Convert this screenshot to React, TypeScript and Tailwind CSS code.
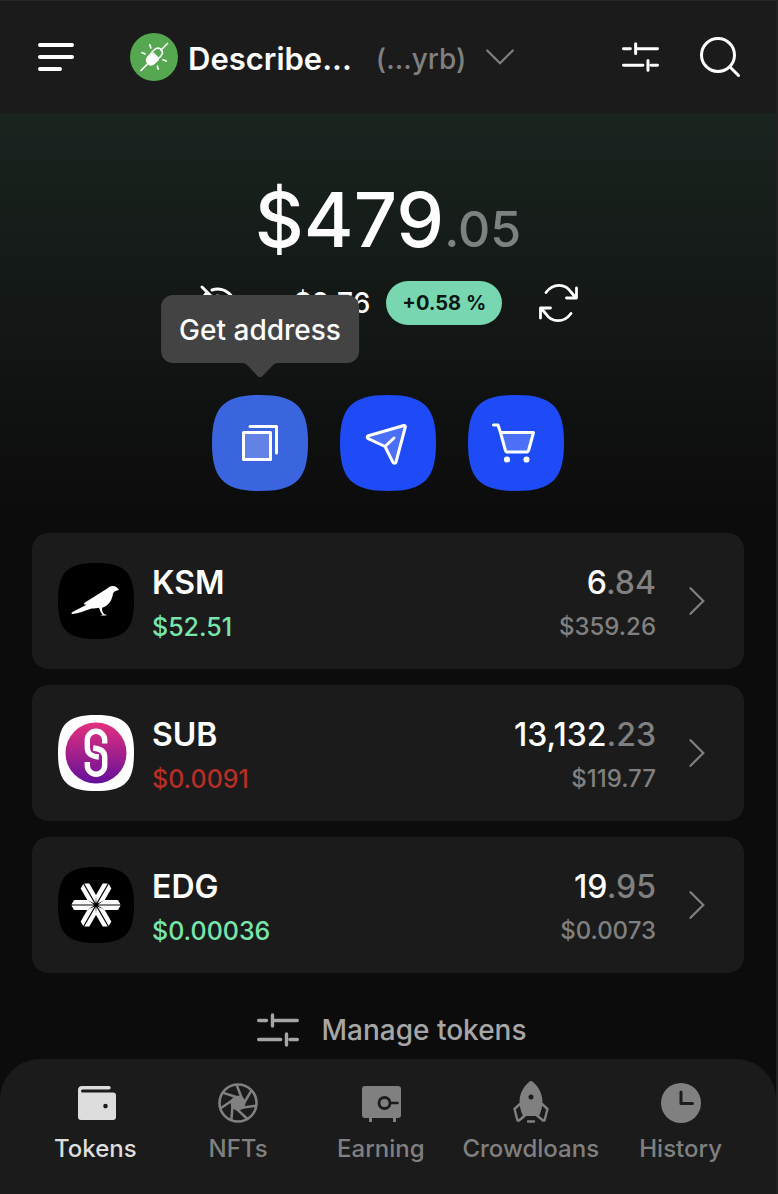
import type { ReactNode } from "react";

const SQUIRCLE = "M50 0C88 0 100 12 100 50S88 100 50 100 0 88 0 50 12 0 50 0Z";

function SlidersIcon({ className }: { className: string }) {
  return (
    <svg viewBox="0 0 42 34" className={className} fill="none" stroke="currentColor" strokeWidth="3.400" strokeLinecap="round" aria-hidden="true">
      <path d="M1.700 7.500h7.800M18 7.500h22.300M15.500 2v11M1.700 26.500h22M33 26.500h7.300M29.500 21v11" />
    </svg>
  );
}

function AvatarIcon() {
  return (
    <svg viewBox="0 0 48 48" className="size-12 shrink-0" fill="none" aria-hidden="true">
      <circle cx="24" cy="24" r="24" fill="#55a84f" />
      <g stroke="#fff" strokeWidth="1.700" strokeLinecap="round">
        <path d="M11 37.500l6-6M31 17l6.500-6.500M19.800 11.800l1 3.200M12 19.700l3 1.200M33 26.700l3.200 1.300M27.300 33l.9 3" />
        <path d="M22 19l2.700-2.500c2-2 5-1.600 6.500.2s1.700 4-.1 6L28.500 25.500z" />
      </g>
      <path d="M21 19.500l8 7.500-4 3.800c-2.500 2.500-5.500 2.300-7.600.3-2.200-2.200-2.200-5.200.1-7.800z" fill="#fff" />
    </svg>
  );
}

function Header() {
  return (
    <header className="flex h-[113px] items-center border-t border-[#282828] bg-[#1b1b1b] pl-[38px] pr-[35px] text-white">
      <button type="button" aria-label="Menu" className="mr-14">
        <svg viewBox="0 0 36 28" className="h-7 w-9" stroke="currentColor" strokeWidth="4" strokeLinecap="round" aria-hidden="true">
          <path d="M2 2h32M2 14h32M2 26h20" />
        </svg>
      </button>
      <button type="button" className="flex min-w-0 items-center">
        <AvatarIcon />
        <span className="ml-2.5 pt-1 text-[31px] leading-10 font-semibold">Describe...</span>
        <span className="ml-6 pt-1 text-[28px] leading-10 font-medium text-[#808080]">(...yrb)</span>
        <svg viewBox="0 0 28 16" className="ml-5 h-4 w-7 shrink-0" fill="none" stroke="#808080" strokeWidth="2.200" strokeLinecap="round" aria-hidden="true">
          <path d="M1.200 1.500L14 14.300 26.800 1.500" />
        </svg>
      </button>
      <button type="button" aria-label="Filter" className="ml-auto">
        <SlidersIcon className="h-[30px] w-[37px]" />
      </button>
      <button type="button" aria-label="Search" className="ml-10">
        <svg viewBox="0 0 42 42" className="size-[42px]" fill="none" stroke="currentColor" strokeWidth="3" strokeLinecap="round" aria-hidden="true">
          <circle cx="19" cy="19" r="16.500" />
          <path d="M31 31l8.500 8.500" />
        </svg>
      </button>
    </header>
  );
}

interface ActionButtonProps {
  label: string;
  color: string;
  children: ReactNode;
}

function ActionButton({ label, color, children }: ActionButtonProps) {
  return (
    <button type="button" aria-label={label} className="block size-24">
      <svg viewBox="0 0 96 96" className="size-24" fill="none" aria-hidden="true">
        <path d="M48 0C84 0 96 12 96 48S84 96 48 96 0 84 0 48 12 0 48 0Z" fill={color} />
        <g stroke="#fff" strokeWidth="3" strokeLinecap="round" strokeLinejoin="round">
          {children}
        </g>
      </svg>
    </button>
  );
}

function Tooltip() {
  return (
    <div role="tooltip" className="absolute bottom-full left-1/2 mb-8 -translate-x-1/2 rounded-xl bg-[#434343] px-[18px] pt-[17px] pb-[15px] text-[28px] leading-9 font-medium whitespace-nowrap text-white">
      Get address
      <svg viewBox="0 0 36 15" className="absolute top-full left-1/2 h-[15px] w-9 -translate-x-1/2" fill="#434343" aria-hidden="true">
        <path d="M0 0c3 0 4 1 6 3l9.500 10c1.600 1.600 3.400 1.600 5 0L30 3c2-2 3-3 6-3z" />
      </svg>
    </div>
  );
}

function Balance() {
  return (
    <section className="flex flex-col items-center bg-linear-to-b from-[#1a241f] to-[#0c0c0c] to-95% pt-[60px] pb-[42px]">
      <p className="flex items-baseline text-white">
        <span className="text-[76px] leading-[92px] font-medium">$479</span>
        <span className="text-[50px] leading-[60px] font-medium text-[#7c827f]">.05</span>
      </p>
      <div className="mt-4 flex h-11 items-center text-white">
        <button type="button" aria-label="Hide balance">
          <svg viewBox="0 0 40 40" className="size-10" fill="none" stroke="currentColor" strokeWidth="3" strokeLinecap="round" aria-hidden="true">
            <path d="M4 4l32 32M14 7c9-3 18 1 24 13-2 4-4 7-7 9M9 10c-3 2-5 6-7 10 6 11 15 15 25 11M15 15a7 7 0 0010 10M19 13c4 0 7 3 8 7" />
          </svg>
        </button>
        <span className="ml-14 text-[28px] leading-9 font-medium">$2.76</span>
        <span className="ml-4 rounded-full bg-[#78d7b1] px-4 text-xl leading-[44px] font-bold text-[#0c1712]">+0.58 %</span>
        <button type="button" aria-label="Refresh" className="ml-9">
          <svg viewBox="0 0 40 40" className="size-10" fill="none" stroke="currentColor" strokeWidth="2.800" strokeLinecap="round" strokeLinejoin="round" aria-hidden="true">
            <path d="M8 9.500C15 0 27 0 33 9l5 6M38.500 5V15H28.500M33 30.500C26 40 14 40 8 31l-5-6M2.500 35V25h10" />
          </svg>
        </button>
      </div>
      <div className="mt-[70px] flex gap-8">
        <div className="relative">
          <ActionButton label="Get address" color="#3b65df">
            <path d="M31.500 37.500h27v27h-27z" fill="#fff" fillOpacity=".2" />
            <path d="M38 31.500h26.500V58" />
          </ActionButton>
          <Tooltip />
        </div>
        <ActionButton label="Send" color="#1e4bf5">
          <path d="M63.800 30.500c1-.3 1.800.5 1.500 1.600l-9.300 34.900c-.5 1.700-2.400 1.800-3.200.2L45 51.500 28.200 43.700c-1.500-.7-1.400-2.500.2-3z" fill="#fff" fillOpacity=".2" />
          <path d="M45 51.500l9-8.500" />
        </ActionButton>
        <ActionButton label="Buy" color="#1e4bf5">
          <path d="M32.500 37.500h33l-4.800 17.500c-.4 1.500-1 2-2.500 2H39.500c-1.300 0-1.800-.5-2.200-2z" fill="#fff" fillOpacity=".2" />
          <path d="M25.500 30H30l2.500 7.500" />
          <circle cx="39" cy="64.500" r="1.600" fill="#fff" />
          <circle cx="58.500" cy="64.500" r="1.600" fill="#fff" />
        </ActionButton>
      </div>
    </section>
  );
}

function KusamaLogo() {
  return (
    <svg viewBox="0 0 76 76" className="size-19 shrink-0" aria-hidden="true">
      <path d={SQUIRCLE} transform="scale(.76)" fill="#000" />
      <path d="M61 27c-1-2.300-3.500-4-6-4-3 0-5 1.500-6.500 3L27 39.500c-1 .7-1.200 1.500-.5 2l2 .2L14.500 49c-1.500.8-1.500 2 0 2 6-.5 12-3 19-5.500 3-.3 5.500-.2 7.500-.8 1 3 2 5 3.500 7l-2.500.8h6.500c-.3-1-1-1.200-2.300-1.300-1.700-1.700-2.500-4.200-2-6.400 7-2.500 9.800-7.800 10.800-14 .7-2 2-3 6-3.800z" fill="#fff" />
    </svg>
  );
}

function SubsocialLogo() {
  return (
    <svg viewBox="0 0 76 76" className="size-19 shrink-0" fill="none" aria-hidden="true">
      <defs>
        <linearGradient id="sub" x1="0" y1="0" x2="0" y2="1">
          <stop stopColor="#e5307d" />
          <stop offset="1" stopColor="#64109b" />
        </linearGradient>
      </defs>
      <path d={SQUIRCLE} transform="scale(.76)" fill="#fff" />
      <circle cx="38" cy="38" r="30.500" fill="url(#sub)" />
      <g stroke="#fff" strokeWidth="5.400">
        <path d="M46.700 28.500V25a8.700 8.700 0 00-17.400 0v8c0 5 4 8.500 11.500 9" />
        <path d="M29.300 47v3.500a8.700 8.700 0 0017.400 0V42c0-5-4-8.300-11.500-9" />
      </g>
    </svg>
  );
}

function EdgewareLogo() {
  return (
    <svg viewBox="0 0 76 76" className="size-19 shrink-0" aria-hidden="true">
      <path d={SQUIRCLE} transform="scale(.76)" fill="#000" />
      {[0, 60, 120, 180, 240, 300].map((angle) => (
        <path key={angle} transform={`translate(38 38) rotate(${angle})`} d="M2-.6L8.500-5H22L24.500-.6zM2 .6L8.500 5H22L24.500.6z" fill="#fff" />
      ))}
    </svg>
  );
}

interface Token {
  symbol: string;
  price: string;
  priceColor: string;
  whole: string;
  decimals: string;
  value: string;
  logo: ReactNode;
}

const tokens: Token[] = [
  { symbol: "KSM", price: "$52.51", priceColor: "text-[#78e5ac]", whole: "6", decimals: ".84", value: "$359.26", logo: <KusamaLogo /> },
  { symbol: "SUB", price: "$0.0091", priceColor: "text-[#b52e27]", whole: "13,132", decimals: ".23", value: "$119.77", logo: <SubsocialLogo /> },
  { symbol: "EDG", price: "$0.00036", priceColor: "text-[#78e5ac]", whole: "19", decimals: ".95", value: "$0.0073", logo: <EdgewareLogo /> },
];

function TokenRow({ token }: { token: Token }) {
  return (
    <li>
      <button type="button" className="flex h-[136px] w-full items-center rounded-2xl bg-[#1b1b1b] pr-[39px] pl-[26px] text-white">
        {token.logo}
        <span className="ml-[18px] flex flex-col items-start pt-1">
          <span className="text-[32px] leading-12 font-semibold">{token.symbol}</span>
          <span className={`text-[25px] leading-10 font-medium ${token.priceColor}`}>{token.price}</span>
        </span>
        <span className="ml-auto flex flex-col items-end pt-1">
          <span className="text-[32px] leading-12 font-medium">
            {token.whole}
            <span className="text-[#808080]">{token.decimals}</span>
          </span>
          <span className="text-2xl leading-10 font-medium text-[#808080]">{token.value}</span>
        </span>
        <svg viewBox="0 0 16 28" className="ml-[33px] h-7 w-4 shrink-0" fill="none" stroke="#808080" strokeWidth="2.200" strokeLinecap="round" aria-hidden="true">
          <path d="M1.500 1.200L14.300 14 1.500 26.800" />
        </svg>
      </button>
    </li>
  );
}

function WalletIcon() {
  return (
    <svg viewBox="-2 0 44 44" className="size-11" aria-hidden="true">
      <path d="M7 5h27a1.500 1.500 0 010 3.500H7.500a1.500 1.500 0 000 3h30.500a3 3 0 013 3V36a3 3 0 01-3 3H6a3 3 0 01-3-3V9c0-2.500 1.500-4 4-4zm23.500 17.800a2.300 2.300 0 100 4.600 2.300 2.300 0 000-4.600z" fill="currentColor" fillRule="evenodd" />
    </svg>
  );
}

const BLADES = 7;

function ApertureIcon() {
  return (
    <svg viewBox="0 0 44 44" className="size-11" fill="none" stroke="currentColor" strokeWidth="2.600" aria-hidden="true">
      <circle cx="22" cy="22" r="18.500" />
      <circle cx="22" cy="22" r="6.500" fill="currentColor" stroke="none" />
      {Array.from({ length: BLADES }, (_, i) => (
        <path key={i} transform={`translate(22 22) rotate(${(i * 360) / BLADES})`} d="M-1.500-18.500L3.300-6 7-.5" strokeWidth="2.500" />
      ))}
    </svg>
  );
}

function SafeIcon() {
  return (
    <svg viewBox="-1 0 44 44" className="size-11" fill="none" aria-hidden="true">
      <path d="M5 5h33a3 3 0 013 3v26a3 3 0 01-3 3h-2v4h-3v-4H12v4H9v-4H5a3 3 0 01-3-3V8a3 3 0 013-3z" fill="currentColor" />
      <circle cx="24.500" cy="22" r="5.500" stroke="#1b1b1b" strokeWidth="2.800" />
      <path d="M30.500 22h7" stroke="#1b1b1b" strokeWidth="2.600" strokeLinecap="round" />
    </svg>
  );
}

function RocketIcon() {
  return (
    <svg viewBox="0 0 44 44" className="size-11" fill="none" aria-hidden="true">
      <path d="M22 0c2 0 11 8 11.500 20 0 6-1.500 11-3.500 15H14c-2-4-3.500-9-3.500-15C11 8 20 0 22 0zm0 13.500a2.500 2.500 0 100 5 2.500 2.500 0 000-5z" fill="currentColor" fillRule="evenodd" />
      <path d="M11 23l-5.500 5 3 11.500h1.500l6-5M33 23l5.500 5-3 11.500H34l-6-5M19 40.500h6" stroke="currentColor" strokeWidth="2.400" strokeLinejoin="round" strokeLinecap="round" />
    </svg>
  );
}

function ClockIcon() {
  return (
    <svg viewBox="0 0 44 44" className="size-11" fill="none" aria-hidden="true">
      <circle cx="22" cy="22" r="20" fill="currentColor" />
      <path d="M22 11v11.500h11.500" stroke="#1b1b1b" strokeWidth="3" strokeLinecap="round" strokeLinejoin="round" />
    </svg>
  );
}

const tabs = [
  { label: "Tokens", icon: <WalletIcon />, active: true },
  { label: "NFTs", icon: <ApertureIcon /> },
  { label: "Earning", icon: <SafeIcon /> },
  { label: "Crowdloans", icon: <RocketIcon /> },
  { label: "History", icon: <ClockIcon /> },
];

export default function App() {
  return (
    <div className="flex min-h-screen flex-col border-r-2 border-[#222222] bg-[#0c0c0c] font-['Inter',sans-serif]">
      <Header />
      <main className="flex flex-1 flex-col">
        <Balance />
        <ul className="flex flex-col gap-4 px-8">
          {tokens.map((token) => (
            <TokenRow key={token.symbol} token={token} />
          ))}
        </ul>
        <button type="button" className="mx-auto mt-[37px] flex items-center gap-[22px] pl-2 text-[28px] leading-10 font-medium text-[#a6a6a6]">
          <SlidersIcon className="h-[34px] w-[42px]" />
          Manage tokens
        </button>
      </main>
      <nav className="mt-auto rounded-t-[40px] bg-[#1b1b1b] px-6 pt-[22px] pb-[27px]">
        <ul className="grid grid-cols-[1fr_1fr_1fr_1.1fr_1fr]">
          {tabs.map((tab) => (
            <li key={tab.label}>
              <a href="#" className={`flex flex-col items-center gap-1.5 text-2xl leading-9 font-medium ${tab.active ? "text-[#dddddd]" : "text-[#808080]"}`}>
                {tab.icon}
                {tab.label}
              </a>
            </li>
          ))}
        </ul>
      </nav>
    </div>
  );
}
